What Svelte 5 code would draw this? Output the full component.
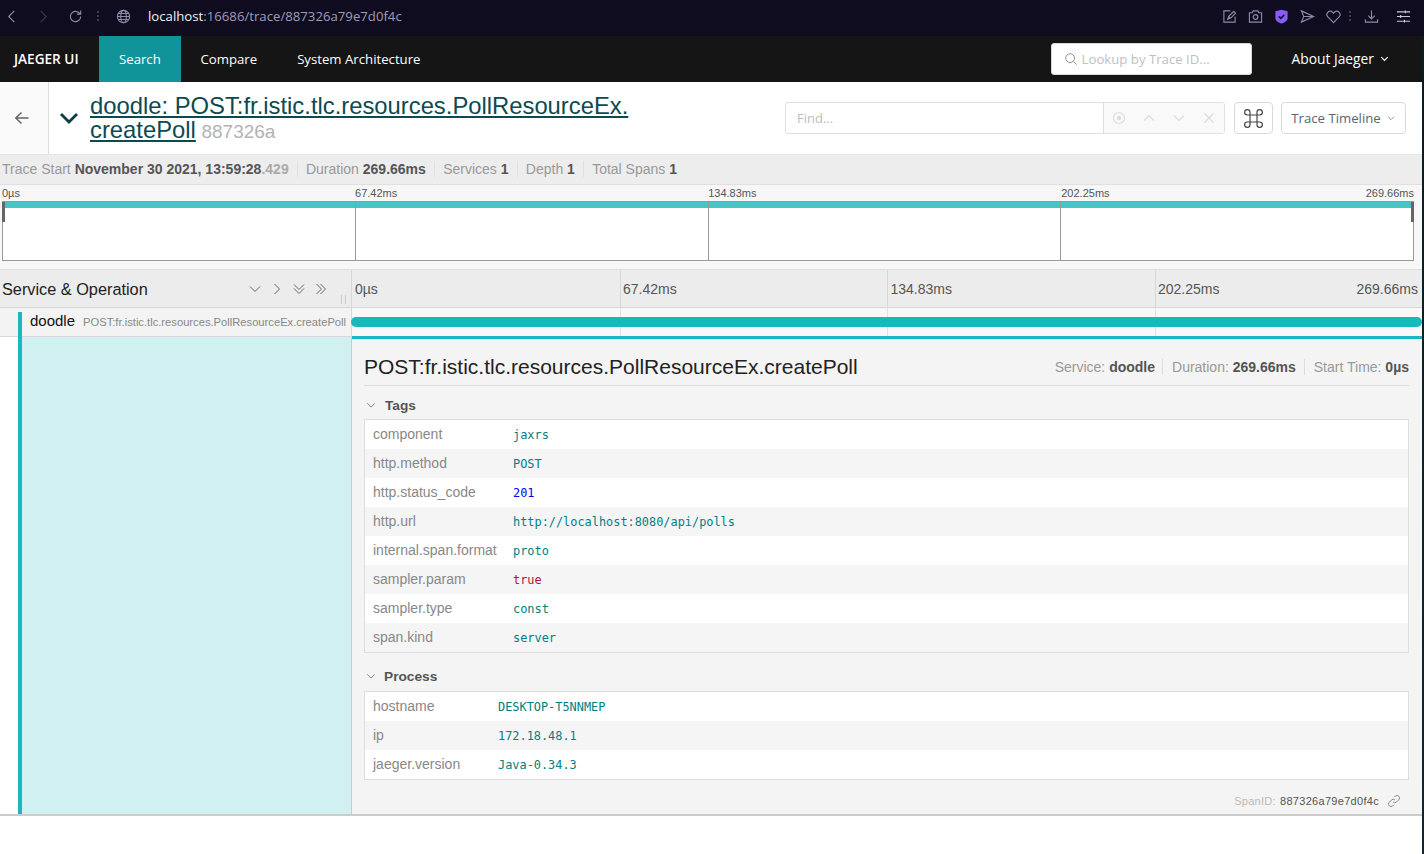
<script>
  const tags = [
    { k: 'component', v: 'jaxrs', c: 'str' },
    { k: 'http.method', v: 'POST', c: 'str' },
    { k: 'http.status_code', v: '201', c: 'num' },
    { k: 'http.url', v: 'http://localhost:8080/api/polls', c: 'str' },
    { k: 'internal.span.format', v: 'proto', c: 'str' },
    { k: 'sampler.param', v: 'true', c: 'bool' },
    { k: 'sampler.type', v: 'const', c: 'str' },
    { k: 'span.kind', v: 'server', c: 'str' }
  ];
  const proc = [
    { k: 'hostname', v: 'DESKTOP-T5NNMEP', c: 'str' },
    { k: 'ip', v: '172.18.48.1', c: 'str' },
    { k: 'jaeger.version', v: 'Java-0.34.3', c: 'str' }
  ];
</script>

<div class="root">
  <div class="browser">
    <div class="b-left">
      <svg class="bi nav1" viewBox="0 0 16 16"><path d="M11 2 5 8l6 6"/></svg>
      <svg class="bi nav2" viewBox="0 0 16 16"><path d="M5 2l6 6-6 6"/></svg>
      <svg class="bi nav3" viewBox="0 0 16 16"><path d="M13.5 8a5.5 5.5 0 1 1-1.7-4L13.5 5.500M13.500 1.500v4h-4"/></svg>
      <span class="kebab"></span>
      <svg class="bi nav4" viewBox="0 0 16 16"><circle cx="8" cy="8" r="6.500"/><ellipse cx="8" cy="8" rx="3" ry="6.500"/><path d="M1.500 8h13M2.500 4.800h11M2.500 11.200h11"/></svg>
      <span class="url"><b>localhost</b>:16686/trace/887326a79e7d0f4c</span>
    </div>
    <div class="b-right">
      <svg class="bi" viewBox="0 0 16 16"><path d="M9 2H2v12h12V8M6 11l1-3 5.500-5.500 2 2L9 10zM7 8l2 2"/></svg>
      <svg class="bi" viewBox="0 0 16 16"><path d="M1.500 4h3l1-2h5l1 2h3v10h-13z"/><circle cx="8" cy="8.500" r="2.500"/></svg>
      <svg class="bi shield" viewBox="0 0 16 16"><path d="M8 .8 14.500 2.500v7c0 3-3.500 5-6.500 6-3-1-6.500-3-6.500-6v-7z"/><path class="chk" d="M5 7.800l2.200 2.200L11 6.300"/></svg>
      <svg class="bi" viewBox="0 0 16 16"><path d="M1.500 2 14.500 8 1.500 14 4 8zM4 8h10"/></svg>
      <svg class="bi" viewBox="0 0 16 16"><path d="M8 14.500 2 8.500a3.700 3.700 0 0 1 0-5 3.700 3.700 0 0 1 5 0l1 1 1-1a3.700 3.700 0 0 1 5 0 3.700 3.700 0 0 1 0 5z"/></svg>
      <span class="kebab"></span>
      <svg class="bi" viewBox="0 0 16 16"><path d="M8 1.500v9M4.500 7 8 10.500 11.500 7M1.500 11v3h13v-3"/></svg>
      <svg class="bi sliders" viewBox="0 0 16 16"><path d="M1 3h14M1 8h14M1 13h14M10 1.500v3M5 6.500v3M9 11.500v3"/></svg>
    </div>
  </div>

  <div class="page">
    <nav class="topnav">
      <span class="brand">JAEGER UI</span>
      <span class="tab active">Search</span>
      <span class="tab">Compare</span>
      <span class="tab">System Architecture</span>
      <div class="nav-right">
        <div class="lookup">
          <svg viewBox="0 0 16 16"><circle cx="7" cy="7" r="5"/><path d="m11 11 3.500 3.500"/></svg>
          <span>Lookup by Trace ID...</span>
        </div>
        <span class="about">About Jaeger
          <svg viewBox="0 0 12 12"><path d="M2.500 4.500 6 8l3.500-3.500"/></svg>
        </span>
      </div>
    </nav>

    <header class="thead">
      <div class="back">
        <svg viewBox="0 0 16 16"><path d="M14.500 8h-13M7.500 2.500 1.800 8l5.700 5.500"/></svg>
      </div>
      <svg class="collapse" viewBox="0 0 20 12"><path d="M2 2l8 8 8-8"/></svg>
      <h1 class="title"><span class="tlink">doodle: POST:fr.istic.tlc.resources.PollResourceEx.<br />createPoll</span> <small>887326a</small></h1>
      <div class="tools">
        <div class="find">
          <span class="find-input">Find...</span>
          <div class="find-btns">
            <svg viewBox="0 0 14 14"><circle cx="7" cy="7" r="5.500"/><circle class="dot" cx="7" cy="7" r="2.200"/></svg>
            <svg viewBox="0 0 14 14"><path d="M2 9.500 7 4.500l5 5"/></svg>
            <svg viewBox="0 0 14 14"><path d="M2 4.500 7 9.500l5-5"/></svg>
            <svg viewBox="0 0 14 14"><path d="M2.500 2.500l9 9M11.500 2.500l-9 9"/></svg>
          </div>
        </div>
        <div class="cmd">
          <svg viewBox="0 0 18 18"><path d="M6 6h6v6H6zM6 6H3.700A2.300 2.300 0 1 1 6 3.700zM12 6V3.700A2.300 2.300 0 1 1 14.300 6zM12 12h2.300A2.300 2.300 0 1 1 12 14.300zM6 12v2.300A2.300 2.300 0 1 1 3.700 12z"/></svg>
        </div>
        <div class="mode">Trace Timeline
          <svg viewBox="0 0 12 12"><path d="M2.500 4.500 6 8l3.500-3.500"/></svg>
        </div>
      </div>
    </header>

    <div class="meta">
      <span class="m">Trace Start <b>November 30 2021, 13:59:28<i>.429</i></b></span>
      <span class="m">Duration <b>269.66ms</b></span>
      <span class="m">Services <b>1</b></span>
      <span class="m">Depth <b>1</b></span>
      <span class="m">Total Spans <b>1</b></span>
    </div>

    <section class="mini">
      <div class="mini-labels">
        <span>0µs</span><span>67.42ms</span><span>134.83ms</span><span>202.25ms</span><span>269.66ms</span>
      </div>
      <div class="mini-graph">
        <div class="mini-bar"></div>
        <div class="mini-cols"><span></span><span></span><span></span><span></span></div>
        <i class="handle hl"></i><i class="handle hr"></i>
      </div>
    </section>

    <div class="ruler">
      <div class="left-col">
        <span class="so">Service &amp; Operation</span>
        <div class="so-icons">
          <svg viewBox="0 0 14 14"><path d="M2 4.500 7 9.500l5-5"/></svg>
          <svg viewBox="0 0 14 14"><path d="M4.500 2 9.500 7l-5 5"/></svg>
          <svg viewBox="0 0 14 14"><path d="M2 2.500 7 7.500l5-5M2 6.500l5 5 5-5"/></svg>
          <svg viewBox="0 0 14 14"><path d="M2.500 2 7.500 7l-5 5M6.500 2l5 5-5 5"/></svg>
        </div>
        <span class="grip"></span>
      </div>
      <div class="ticks">
        <span>0µs</span><span>67.42ms</span><span>134.83ms</span><span>202.25ms</span>
        <em>269.66ms</em>
      </div>
    </div>

    <div class="row">
      <div class="left-col row-left">
        <span class="row-accent"></span>
        <span class="svc">doodle</span>
        <span class="op">POST:fr.istic.tlc.resources.PollResourceEx.createPoll</span>
      </div>
      <div class="row-right">
        <div class="row-cols"><span></span><span></span><span></span><span></span></div>
        <div class="span-bar"></div>
      </div>
    </div>

    <div class="detail-wrap">
      <div class="detail-left"><span class="detail-accent"></span><span class="detail-tint"></span></div>
      <div class="detail">
        <div class="d-head">
          <h2>POST:fr.istic.tlc.resources.PollResourceEx.createPoll</h2>
          <div class="d-meta">
            <span class="dm">Service: <b>doodle</b></span>
            <span class="dm">Duration: <b>269.66ms</b></span>
            <span class="dm">Start Time: <b>0µs</b></span>
          </div>
        </div>

        <div class="sec-title">
          <svg viewBox="0 0 12 12"><path d="M1.500 4 6 8.500 10.500 4"/></svg>
          <b>Tags</b>
        </div>
        <div class="kv tags-kv">
          {#each tags as t}
            <div class="kv-row"><span class="k">{t.k}</span><span class="v {t.c}">{t.v}</span></div>
          {/each}
        </div>

        <div class="sec-title proc-title">
          <svg viewBox="0 0 12 12"><path d="M1.500 4 6 8.500 10.500 4"/></svg>
          <b>Process</b>
        </div>
        <div class="kv proc-kv">
          {#each proc as t}
            <div class="kv-row"><span class="k">{t.k}</span><span class="v {t.c}">{t.v}</span></div>
          {/each}
        </div>

        <div class="span-id">
          <span class="sid-l">SpanID:</span> <span class="sid-v">887326a79e7d0f4c</span>
          <svg viewBox="0 0 14 14"><path d="M6 8a2.500 2.500 0 0 0 3.500 0l2.500-2.500A2.500 2.500 0 0 0 8.500 2L7.500 3M8 6a2.500 2.500 0 0 0-3.500 0L2 8.500A2.500 2.500 0 0 0 5.500 12l1-1"/></svg>
        </div>
      </div>
    </div>
  </div>
</div>

<style>
  :global(body) { margin: 0; background: #fff; }
  .root { width: 1424px; height: 854px; overflow: hidden; font-family: "Liberation Sans", Arial, sans-serif; background: linear-gradient(#0d1a20, #0d2a2c); }

  .browser { height: 36px; background: #0f0c20; display: flex; justify-content: space-between; align-items: flex-start; }
  .b-left { display: flex; align-items: center; height: 32px; width: 600px; }
  .b-right { display: flex; align-items: center; height: 32px; gap: 11px; padding-right: 13px; }
  .bi { width: 15px; height: 15px; fill: none; stroke: #8f8aa8; stroke-width: 1.200; flex: none; }
  .nav1 { margin-left: 3.500px; }
  .nav2 { margin-left: 17px; stroke: #3b3852; }
  .nav3 { margin-left: 17px; }
  .nav4 { margin-left: 16.500px; }
  .kebab { width: 2px; height: 10px; margin-left: 14.500px; flex: none; background: repeating-linear-gradient(#3f3c55 0 2px, transparent 2px 4px); }
  .b-right .kebab { margin-left: -2.500px; margin-right: 1.500px; }
  .b-right .sliders { margin-left: 6.500px; }
  .url { margin-left: 17.500px; font: 13.200px "Open Sans", sans-serif; color: #a09bb8; white-space: nowrap; }
  .url b { font-weight: 400; color: #f2f1f6; }
  .shield { fill: #8b5cf6; stroke: none; }
  .chk { fill: none; stroke: #17132b; stroke-width: 1.800; }
  .sliders { stroke: #c9c7d6; }

  .page { width: 1422px; height: 818px; background: #fff; }

  .topnav { height: 46px; background: #151515; display: flex; align-items: center; font: 13.200px "Open Sans", sans-serif; color: #fff; }
  .brand { font-weight: 600; padding-left: 14px; padding-bottom: 2px; width: 85px; font-size: 13.600px; flex: none; }
  .tab { height: 46px; line-height: 46px; padding: 0 20px; }
  .tab.active { background: #11939a; width: 42px; }
  .tab:nth-child(3) { padding: 0 20px 0 19.500px; }
  .nav-right { margin-left: auto; display: flex; align-items: center; }
  .lookup { width: 201px; height: 32px; background: #fff; border: 1px solid #d9d9d9; border-radius: 3px; display: flex; align-items: center; gap: 4px; padding-left: 12px; box-sizing: border-box; color: #bfbfbf; }
  .lookup svg { width: 14px; height: 14px; fill: none; stroke: #8a8a8a; stroke-width: 1.100; }
  .about { margin-left: 40px; margin-right: 32px; padding-bottom: 2px; display: flex; align-items: center; gap: 5px; font-size: 13.800px; white-space: nowrap; }
  .about svg { width: 11px; height: 11px; fill: none; stroke: #fff; stroke-width: 1.300; }

  .thead { height: 73px; box-sizing: border-box; border-bottom: 1px solid #e6e6e6; display: flex; align-items: stretch; position: relative; }
  .back { width: 49px; background: #fafafa; border-right: 1px solid #ddd; display: flex; align-items: center; justify-content: center; box-sizing: border-box; flex: none; }
  .back svg { width: 16px; height: 16px; fill: none; stroke: #666; stroke-width: 1.500; margin-left: -5px; }
  .collapse { width: 20px; height: 12px; fill: none; stroke: #0c3c44; stroke-width: 2.800; align-self: center; margin-left: 10px; flex: none; }
  .title { margin: 0 0 0 11px; padding-top: 12px; font-size: 23.800px; line-height: 24px; font-weight: 400; color: #0c4a52; white-space: nowrap; width: 640px; }
  .tlink { text-decoration: underline; text-decoration-thickness: 2px; text-underline-offset: 2px; }
  .title small { font-size: 19px; color: #b3b3b3; margin-left: -1px; }
  .tools { position: absolute; right: 16px; top: 20px; display: flex; }
  .find { display: flex; width: 440px; height: 32px; box-sizing: border-box; border: 1px solid #e0e0e0; border-radius: 3px; }
  .find-input { padding-left: 11px; line-height: 30px; font-size: 13px; color: #bdbdbd; box-sizing: border-box; flex: 1; border-right: 1px solid #dedede; font-family: "Open Sans", sans-serif; }
  .find-btns { width: 120px; flex: none; background: #f9f9f9; display: flex; align-items: center; justify-content: space-between; padding: 0 8px; box-sizing: border-box; }
  .find-btns svg { width: 14px; height: 14px; fill: none; stroke: #dcdcdc; stroke-width: 1.200; }
  .dot { fill: #dcdcdc; stroke: none; }
  .cmd { width: 39px; height: 32px; margin-left: 9px; box-sizing: border-box; border: 1px solid #d9d9d9; border-radius: 4px; display: flex; align-items: center; justify-content: center; }
  .cmd svg { width: 21px; height: 21px; fill: none; stroke: #444; stroke-width: 1; }
  .mode { width: 125px; height: 32px; margin-left: 8px; box-sizing: border-box; border: 1px solid #d9d9d9; border-radius: 4px; display: flex; align-items: center; justify-content: center; gap: 5px; font: 13.200px "Open Sans", sans-serif; color: #5a6570; white-space: nowrap; }
  .mode svg { width: 10px; height: 10px; fill: none; stroke: #888; stroke-width: 1.100; }

  .meta { height: 30px; background: #ededed; border-bottom: 1px solid #e0e0e0; box-sizing: border-box; display: flex; align-items: center; padding: 0 0 2px 2px; font-size: 14px; color: #999; }
  .m { padding-right: 8px; margin-right: 8.300px; border-right: 1px solid #e0e0e0; line-height: 16px; white-space: nowrap; }
  .m:last-child { border: 0; }
  .m b { color: #555; }
  .m i { font-style: normal; color: #aaa; }

  .mini { height: 85px; background: #f7f7f7; box-sizing: border-box; border-bottom: 1px solid #ddd; padding: 0 8px 0 2px; }
  .mini-labels { height: 16px; display: flex; justify-content: space-between; font-size: 11px; line-height: 17px; color: #555; position: relative; }
  .mini-labels span { width: 352.750px; }
  .mini-labels span:last-child { position: absolute; right: 0; width: auto; }
  .mini-graph { height: 60px; box-sizing: border-box; border: 1px solid #999; background: #fff; position: relative; }
  .mini-bar { height: 6px; background: #45c4c9; }
  .mini-cols { position: absolute; inset: 0 0 0 -1px; display: grid; grid-template-columns: repeat(4, 1fr); }
  .mini-cols span { border-left: 1px solid #999; }
  .mini-cols span:first-child { border-left: 0; }
  .handle { position: absolute; top: 0; width: 3px; height: 20px; background: #666; }
  .hl { left: -1px; }
  .hr { right: -1px; }

  .ruler { height: 38px; display: flex; background: #ececec; border-bottom: 1px solid #d8d8d8; box-sizing: border-box; }
  .left-col { width: 352px; flex: none; box-sizing: border-box; border-right: 1px solid #d8d8d8; display: flex; align-items: center; position: relative; padding-left: 2px; }
  .so { font-size: 16.300px; color: #222; margin-top: 2px; }
  .so-icons { position: absolute; left: 248px; top: 12px; display: flex; gap: 8px; }
  .so-icons svg { width: 14px; height: 14px; fill: none; stroke: #666; stroke-width: 1; }
  .grip { position: absolute; right: 5px; bottom: 3px; width: 5px; height: 9px; border-left: 1px solid #ccc; border-right: 1px solid #ccc; box-sizing: border-box; }
  .ticks { flex: 1; display: grid; grid-template-columns: repeat(4, 1fr); position: relative; }
  .ticks span { padding-left: 2.500px; line-height: 38px; font-size: 14px; color: #555; border-left: 1px solid #d8d8d8; }
  .ticks span:first-child { border-left: 0; padding-left: 3px; }
  .ticks em { position: absolute; right: 4px; top: 0; line-height: 38px; font-size: 14px; font-style: normal; color: #555; }

  .row { height: 29px; display: flex; background: #f8f8f8; box-sizing: border-box; border-bottom: 1px solid #d8d8d8; }
  .row-left { background: #f3f3f3; padding-left: 30px; gap: 8px; white-space: nowrap; }
  .row-accent { position: absolute; left: 18px; top: 4px; bottom: -1px; width: 4px; background: #17b8be; }
  .svc { font-size: 15px; color: #111; margin-top: -4px; }
  .op { font-size: 11.200px; color: #888; }
  .row-right { flex: 1; position: relative; }
  .row-cols { position: absolute; inset: 0; display: grid; grid-template-columns: repeat(4, 1fr); }
  .row-cols span { border-left: 1px solid #e2e2e2; }
  .row-cols span:first-child { border-left: 0; }
  .span-bar { position: absolute; left: -1px; right: 0; top: 9px; height: 10px; border-radius: 5px; background: #17b8be; }

  .detail-wrap { display: flex; border-bottom: 2px solid #ccc; box-sizing: border-box; height: 479px; }
  .detail-left { width: 352px; flex: none; display: flex; box-sizing: border-box; border-right: 1px solid #ccc; }
  .detail-accent { width: 4px; margin-left: 18px; background: #17b8be; flex: none; }
  .detail-tint { flex: 1; background: #d0f0f1; }
  .detail { flex: 1; box-sizing: border-box; background: #f4f4f4; border-top: 3px solid #17b8be; margin-top: -1px; padding: 0 13px 0 12px; position: relative; }
  .d-head { height: 47px; box-sizing: border-box; border-bottom: 1px solid #ddd; display: flex; align-items: center; justify-content: space-between; padding-top: 10px; }
  h2 { margin: 0; font-size: 21px; line-height: 24px; font-weight: 400; color: #222; white-space: nowrap; }
  .d-meta { display: flex; font-size: 14px; color: #999; }
  .dm { padding: 0 8px 0 9px; border-left: 1px solid #ddd; line-height: 16px; }
  .dm:first-child { border-left: 0; padding-right: 7px; }
  .dm:last-child { padding-right: 0; }
  .dm b { color: #555; }
  .sec-title { height: 33px; box-sizing: border-box; padding-top: 5px; display: flex; align-items: center; font-size: 13.700px; color: #444; }
  .sec-title svg { width: 10px; height: 10px; fill: none; stroke: #777; stroke-width: 1.100; margin: 0 9px 0 2px; flex: none; }
  .sec-title b { font-weight: 700; color: #555; }
  .kv { background: #fff; border: 1px solid #ddd; }
  .kv-row { height: 29px; display: flex; align-items: center; padding-left: 8px; }
  .kv-row:nth-child(even) { background: #f5f5f5; }
  .k { font-size: 14px; color: #888; white-space: nowrap; flex: none; margin-top: -2px; }
  .tags-kv .k { width: 140px; }
  .proc-kv .k { width: 125px; }
  .v { font: 11.900px "DejaVu Sans Mono", monospace; white-space: nowrap; padding-top: 1px; }
  .str { color: #008080; }
  .num { color: #0000ff; }
  .bool { color: #b2143c; }
  .proc-title { height: 30px; padding-top: 0; margin-top: 8px; }
  .proc-title b { margin-left: -1px; }
  .tags-kv { height: 234px; box-sizing: border-box; }
  .proc-kv { height: 89px; box-sizing: border-box; }
  .span-id { display: flex; justify-content: flex-end; align-items: center; gap: 4px; font-size: 11px; padding: 14px 8px 0 0; }
  .sid-l { color: #bbb; letter-spacing: .3px; }
  .sid-v { color: #555; letter-spacing: .3px; }
  .span-id svg { width: 14px; height: 14px; fill: none; stroke: #888; stroke-width: 1; margin-left: 4px; }
</style>
